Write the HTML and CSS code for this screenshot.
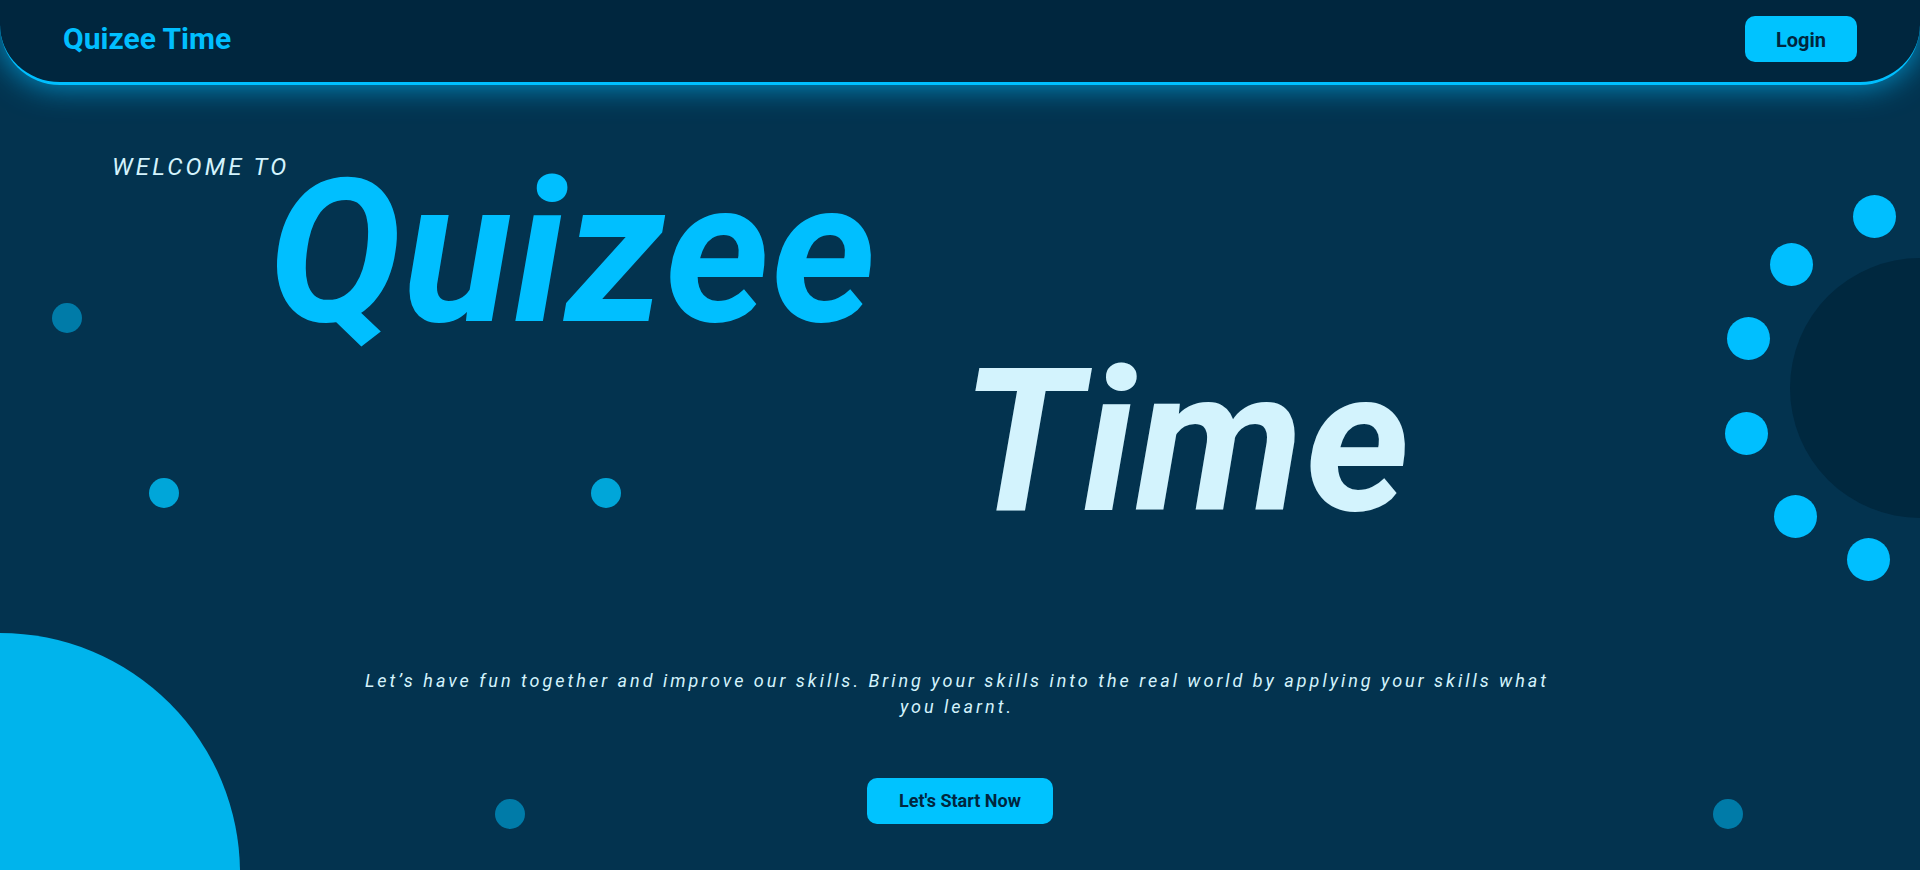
FILE: index.html
```html
<!DOCTYPE html>
<html lang="en">
<head>
<meta charset="utf-8">
<title>Quizee Time</title>
<link rel="stylesheet" href="styles.css">
</head>
<body>
<div class="page">
  <div class="decor" aria-hidden="true">
    <span class="dot dot-dim d1"></span>
    <span class="dot dot-mid d2"></span>
    <span class="dot dot-mid d3"></span>
    <span class="dot dot-dim d4"></span>
    <span class="dot dot-dim d5"></span>
    <span class="big-circle"></span>
    <span class="dark-circle"></span>
    <span class="ring r1"></span>
    <span class="ring r2"></span>
    <span class="ring r3"></span>
    <span class="ring r4"></span>
    <span class="ring r5"></span>
    <span class="ring r6"></span>
  </div>

  <header class="nav">
    <a class="logo" href="#">Quizee Time</a>
    <button class="btn btn-login">Login</button>
  </header>

  <main class="hero">
    <h3 class="welcome">WELCOME TO</h3>
    <h1 class="title">
      <span class="title-line title-quizee">Quizee</span>
      <span class="title-line title-time">Time</span>
    </h1>
    <p class="tagline">Let’s have fun together and improve our skills. Bring your skills into the real world by applying your skills what you learnt.</p>
    <div class="cta-row">
      <button class="btn btn-cta">Let's Start Now</button>
    </div>
  </main>
</div>
</body>
</html>
```

FILE: styles.css
```css
* {
  box-sizing: border-box;
}

html, body {
  margin: 0;
  padding: 0;
  background: #03334f;
  font-family: Roboto, "Liberation Sans", Arial, sans-serif;
  overflow: hidden;
}

.page {
  position: relative;
  width: 100%;
  height: 870px;
  overflow: hidden;
  background: #03334f;
}

/* ---------- decoration ---------- */
.decor {
  position: absolute;
  inset: 0;
  pointer-events: none;
}

.dot {
  position: absolute;
  width: 30px;
  height: 30px;
  border-radius: 50%;
}
.dot-dim { background: #007ba8; }
.dot-mid { background: #00a6d9; }

.d1 { left: 52px; top: 303px; }
.d2 { left: 149px; top: 478px; }
.d3 { left: 591px; top: 478px; }
.d4 { left: 495px; top: 799px; }
.d5 { left: 1713px; top: 799px; }

.big-circle {
  position: absolute;
  left: -240px;
  top: 633px;
  width: 480px;
  height: 480px;
  border-radius: 50%;
  background: #00b4ec;
}

.dark-circle {
  position: absolute;
  left: 1790px;
  top: 258px;
  width: 260px;
  height: 260px;
  border-radius: 50%;
  background: #00283f;
}

.ring {
  position: absolute;
  width: 43px;
  height: 43px;
  border-radius: 50%;
  background: #00bfff;
}
.r1 { left: 1853px; top: 195px; }
.r2 { left: 1770px; top: 243px; }
.r3 { left: 1727px; top: 317px; }
.r4 { left: 1725px; top: 412px; }
.r5 { left: 1774px; top: 495px; }
.r6 { left: 1847px; top: 538px; }

/* ---------- nav ---------- */
.nav {
  position: relative;
  z-index: 2;
  display: flex;
  align-items: center;
  justify-content: space-between;
  padding: 16px 63px 20px;
  background: #00263e;
  border-bottom: 3px solid #00bfff;
  border-bottom-left-radius: 60px;
  border-bottom-right-radius: 60px;
  box-shadow: 0 0 32px rgba(0, 180, 245, 0.8);
}

.logo {
  color: #00bfff;
  text-decoration: none;
  font-weight: 700;
  font-size: 30px;
  line-height: 1;
}

.btn {
  border: none;
  cursor: pointer;
  background: #00c3ff;
  color: #00263e;
  font-family: Roboto, "Liberation Sans", Arial, sans-serif;
  font-weight: 700;
  font-size: 18px;
  line-height: 22px;
  padding: 12px 32px;
  border-radius: 10px;
}

.btn-login {
  font-size: 20px;
  line-height: 24px;
  padding: 12px 31px 10px;
}

/* ---------- hero ---------- */
.hero {
  position: relative;
  z-index: 1;
  display: flex;
  flex-direction: column;
  padding-top: 68px;
}

.welcome {
  margin: 0 0 -23px 112px;
  font-size: 24px;
  line-height: 28px;
  font-weight: 400;
  font-style: italic;
  letter-spacing: 3.2px;
  color: #d4f3fd;
}

.title {
  margin: 0;
  display: flex;
  flex-direction: column;
  font-size: 200px;
  line-height: 189px;
  font-weight: 700;
  font-style: italic;
  letter-spacing: 1.5px;
}

.title-line {
  display: block;
}

.title-quizee {
  color: #00bfff;
  margin-left: 268px;
}

.title-time {
  color: #d3f3fd;
  margin-left: 961px;
}

.tagline {
  align-self: center;
  width: 1220px;
  margin: 132px 0 0 -6px;
  text-align: center;
  font-style: italic;
  font-size: 18px;
  line-height: 26px;
  letter-spacing: 3px;
  color: #d4f3fd;
}

.cta-row {
  display: flex;
  justify-content: center;
  margin-top: 58px;
}
```
